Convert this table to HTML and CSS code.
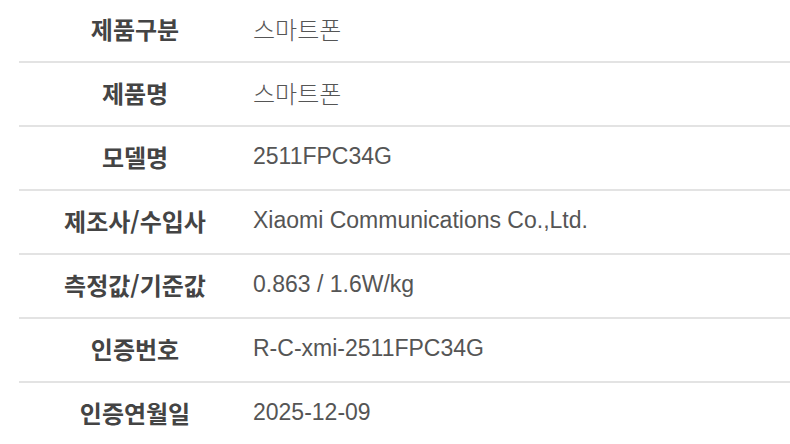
FILE: index.html
```html
<!DOCTYPE html>
<html lang="ko">
<head>
<meta charset="utf-8">
<link rel="stylesheet" href="styles.css">
</head>
<body>
<div class="spec">
  <div class="row"><div class="label">제품구분</div><div class="value value-ko">스마트폰</div></div>
  <div class="row"><div class="label">제품명</div><div class="value value-ko">스마트폰</div></div>
  <div class="row"><div class="label">모델명</div><div class="value">2511FPC34G</div></div>
  <div class="row"><div class="label">제조사/수입사</div><div class="value">Xiaomi Communications Co.,Ltd.</div></div>
  <div class="row"><div class="label">측정값/기준값</div><div class="value">0.863 / 1.6W/kg</div></div>
  <div class="row"><div class="label">인증번호</div><div class="value">R-C-xmi-2511FPC34G</div></div>
  <div class="row"><div class="label">인증연월일</div><div class="value">2025-12-09</div></div>
</div>
</body>
</html>
```
FILE: styles.css
```css
html, body {
  margin: 0;
  padding: 0;
  background: #ffffff;
  overflow: hidden;
}
.spec {
  margin-top: -1px;
  margin-left: 19px;
}
.row {
  display: grid;
  grid-template-columns: 232px 1fr;
  align-items: center;
  height: 62px;
  border-bottom: 2px solid #e3e3e3;
}
.label {
  padding-bottom: 3px;
  text-align: center;
  font-family: "Noto Sans CJK KR", "Noto Sans", sans-serif;
  font-weight: 700;
  font-size: 24px;
  color: #444444;
}
.value {
  padding-bottom: 3px;
  padding-left: 2px;
  font-family: "Liberation Sans", "Noto Sans CJK KR", sans-serif;
  font-size: 23px;
  color: #555555;
}
.value-ko {
  font-family: "Noto Sans CJK KR", sans-serif;
  font-weight: 300;
  font-size: 24px;
}
```
